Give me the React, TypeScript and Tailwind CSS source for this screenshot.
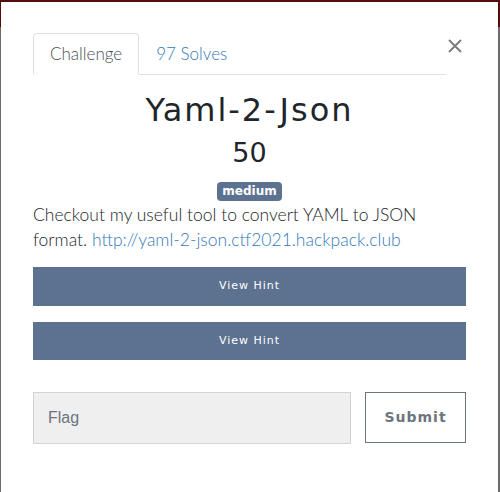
import React, { useState } from 'react';

const App: React.FC = () => {
  const [flag, setFlag] = useState('');

  return (
    <div className="w-[500px] h-[492px] overflow-hidden bg-[linear-gradient(#560c0c_0_27px,#6a6a6a_27px)] pl-px pr-[2px] pt-[2px]">
      <div className="h-[490px] bg-white px-8 pt-[31px]">
        {/* tabs + close */}
        <div className="flex items-start">
          <nav className="flex flex-1 border-b border-[#dee2e6] font-['Lato',sans-serif] text-[17px] font-light">
            <div className="-mb-px h-[42px] px-[16px] flex items-center rounded-t-[4px] border border-[#dee2e6] border-b-white bg-white text-[#495057]">
              Challenge
            </div>
            <div className="h-[41px] px-[17px] flex items-center text-[#337ab7]">97 Solves</div>
          </nav>
          <button className="w-5 flex justify-end pt-[6px]" aria-label="Close">
            <svg width="14" height="14" viewBox="0 0 14 14" className="mr-[4px]">
              <path d="M1 1L13 13M13 1L1 13" stroke="#7a7a7a" strokeWidth="1.8" />
            </svg>
          </button>
        </div>

        {/* title */}
        <div className="text-center font-['DejaVu_Sans',sans-serif] text-[#212529]">
          <h1 className="mt-[15px] text-[32px] leading-[40px] tracking-[2px]">Yaml-2-Json</h1>
          <h2 className="mt-[6px] text-[27px] leading-[34px]">50</h2>
          <div className="mt-[12px] h-[19px] flex justify-center">
            <span className="rounded-[4px] bg-[#5c7290] px-[5px] text-[12px] leading-[19px] font-bold text-white">
              medium
            </span>
          </div>
        </div>

        <p className="mt-[1px] font-['Lato',sans-serif] font-light text-[17.5px] leading-[25px] text-[#212529]">
          Checkout my useful tool to convert YAML to JSON format.{' '}
          <a className="text-[#337ab7]">http://yaml-2-json.ctf2021.hackpack.club</a>
        </p>

        <div className="mt-[15px] flex flex-col gap-4 font-['DejaVu_Sans',sans-serif]">
          <button className="h-[39px] w-full bg-[#5d7290] text-[11px] tracking-[1px] text-white">View Hint</button>
          <button className="h-[38px] w-full bg-[#5d7290] text-[11px] tracking-[1px] text-white">View Hint</button>
        </div>

        <div className="mt-[32px] flex gap-[14px]">
          <input
            value={flag}
            onChange={e => setFlag(e.target.value)}
            placeholder="Flag"
            className="h-[52px] w-[318px] border border-[#ced4da] bg-[#efefef] px-[14px] font-['Liberation_Sans',sans-serif] text-[16px] text-[#495057] placeholder:text-[#6c757d] outline-none"
          />
          <button className="h-[51px] flex-1 border border-[#6c757d] font-['DejaVu_Sans',sans-serif] text-[14px] font-semibold tracking-[1px] text-[#6c757d]">
            Submit
          </button>
        </div>
      </div>
    </div>
  );
};

export default App;
